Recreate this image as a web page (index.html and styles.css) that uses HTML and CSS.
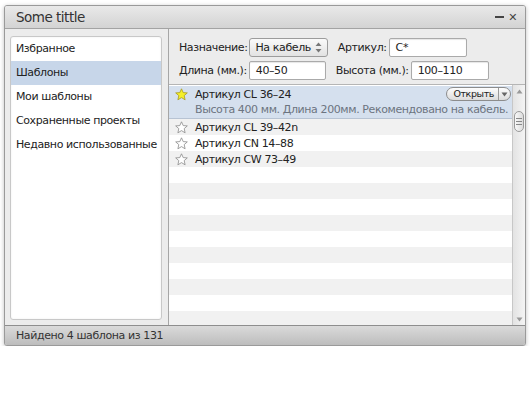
FILE: index.html
```html
<!DOCTYPE html>
<html lang="ru">
<head>
<meta charset="utf-8">
<title>Some tittle</title>
<link rel="stylesheet" href="styles.css">
</head>
<body>
<div class="window">
  <div class="titlebar">
    <span class="title">Some tittle</span>
    <span class="controls"><span class="min"></span><span class="close">✕</span></span>
  </div>
  <div class="main">
    <aside class="sidebar">
      <ul class="nav">
        <li>Избранное</li>
        <li class="active">Шаблоны</li>
        <li>Мои шаблоны</li>
        <li>Сохраненные проекты</li>
        <li>Недавно использованные</li>
      </ul>
    </aside>
    <section class="content">
      <div class="filters">
        <div class="frow">
          <label class="lbl">Назначение:</label>
          <span class="select">На кабель <span class="updown"><svg width="7" height="11" viewBox="0 0 7 11"><path d="M3.5 0.5 L6.5 4 L0.5 4 Z" fill="#777"/><path d="M3.5 10.5 L6.5 7 L0.5 7 Z" fill="#777"/></svg></span></span>
          <label class="lbl lbl2">Артикул:</label>
          <span class="input w78">C*</span>
        </div>
        <div class="frow">
          <label class="lbl">Длина (мм.):</label>
          <span class="input w77">40–50</span>
          <label class="lbl lbl2">Высота (мм.):</label>
          <span class="input w78">100–110</span>
        </div>
      </div>
      <div class="listwrap">
        <div class="list">
          <div class="row sel">
            <div class="line">
              <svg class="star" width="13" height="13" viewBox="0 0 13 13"><path d="M6.5 0.8 L8.2 4.6 L12.3 4.9 L9.2 7.6 L10.1 11.8 L6.5 9.6 L2.9 11.8 L3.8 7.6 L0.7 4.9 L4.8 4.6 Z" fill="#f4ef2a" stroke="#a89a20" stroke-width="0.8" stroke-linejoin="round"/></svg>
              <span class="name">Артикул CL 36–24</span>
              <span class="open"><span class="olbl">Открыть</span><span class="odrop"><svg width="7" height="5" viewBox="0 0 7 5"><path d="M0.5 0.5 L6.5 0.5 L3.5 4.5 Z" fill="#666"/></svg></span></span>
            </div>
            <div class="desc">Высота 400 мм. Длина 200мм. Рекомендовано на кабель.</div>
          </div>
          <div class="row alt"><svg class="star" width="13" height="13" viewBox="0 0 13 13"><path d="M6.5 0.8 L8.2 4.6 L12.3 4.9 L9.2 7.6 L10.1 11.8 L6.5 9.6 L2.9 11.8 L3.8 7.6 L0.7 4.9 L4.8 4.6 Z" fill="#fff" stroke="#8a8a8a" stroke-width="0.8" stroke-linejoin="round"/></svg><span class="name">Артикул CL 39–42n</span></div>
          <div class="row"><svg class="star" width="13" height="13" viewBox="0 0 13 13"><path d="M6.5 0.8 L8.2 4.6 L12.3 4.9 L9.2 7.6 L10.1 11.8 L6.5 9.6 L2.9 11.8 L3.8 7.6 L0.7 4.9 L4.8 4.6 Z" fill="#fff" stroke="#8a8a8a" stroke-width="0.8" stroke-linejoin="round"/></svg><span class="name">Артикул CN 14–88</span></div>
          <div class="row alt"><svg class="star" width="13" height="13" viewBox="0 0 13 13"><path d="M6.5 0.8 L8.2 4.6 L12.3 4.9 L9.2 7.6 L10.1 11.8 L6.5 9.6 L2.9 11.8 L3.8 7.6 L0.7 4.9 L4.8 4.6 Z" fill="#fff" stroke="#8a8a8a" stroke-width="0.8" stroke-linejoin="round"/></svg><span class="name">Артикул CW 73–49</span></div>
          <div class="row"></div>
          <div class="row alt"></div>
          <div class="row"></div>
          <div class="row alt"></div>
          <div class="row"></div>
          <div class="row alt"></div>
          <div class="row"></div>
          <div class="row alt"></div>
          <div class="row"></div>
          <div class="row alt"></div>
          <div class="row"></div>
        </div>
        <div class="scrollbar">
          <span class="arrow"><svg width="7" height="5" viewBox="0 0 7 5"><path d="M3.5 0.5 L6.5 4.5 L0.5 4.5 Z" fill="#999"/></svg></span>
          <div class="track"><span class="thumb"><span class="grip"></span><span class="grip"></span><span class="grip"></span></span></div>
          <span class="arrow"><svg width="7" height="5" viewBox="0 0 7 5"><path d="M0.5 0.5 L6.5 0.5 L3.5 4.5 Z" fill="#999"/></svg></span>
        </div>
      </div>
    </section>
  </div>
  <div class="statusbar">Найдено 4 шаблона из 131</div>
</div>
</body>
</html>
```

FILE: styles.css
```css
* { box-sizing: border-box; }
html, body { margin: 0; padding: 0; background: #fff; }
body {
  font-family: "DejaVu Sans", "Liberation Sans", sans-serif;
  font-size: 11px;
  letter-spacing: -0.4px;
  color: #222;
}
.window {
  margin: 5px 0 0 4px;
  width: 522px;
  height: 341px;
  border: 1px solid #9a9a9a;
  border-radius: 3px;
  box-shadow: 0 1px 4px rgba(0,0,0,0.25);
  display: flex;
  flex-direction: column;
  overflow: hidden;
  background: #ececec;
}
.titlebar {
  height: 23px;
  flex: none;
  display: flex;
  align-items: center;
  justify-content: space-between;
  padding: 0 8px 0 11px;
  background: linear-gradient(#e9e9e9, #d3d3d3);
  border-bottom: 1px solid #a3a3a3;
}
.title {
  font-size: 13.5px;
  letter-spacing: -0.5px;
  color: #333;
}
.controls {
  display: flex;
  align-items: center;
  gap: 4px;
  color: #444;
}
.min {
  width: 9px;
  height: 2px;
  background: #444;
}
.close {
  font-size: 11px;
  font-weight: bold;
  line-height: 1;
}
.main {
  flex: 1;
  display: flex;
  min-height: 0;
}
.sidebar {
  width: 164px;
  flex: none;
  border-right: 1px solid #a6a6a6;
  padding: 7px 6px 5px 5px;
  background: #ececec;
  display: flex;
}
.nav {
  list-style: none;
  margin: 0;
  padding: 0;
  flex: 1;
  background: #fff;
  border: 1px solid #c8c8c8;
  border-radius: 3px;
  box-shadow: inset 0 0 2px rgba(0,0,0,0.08);
}
.nav li {
  height: 24px;
  line-height: 24px;
  padding-left: 5px;
  white-space: nowrap;
}
.nav li.active {
  background: #c7d6e9;
}
.content {
  flex: 1;
  display: flex;
  flex-direction: column;
  min-width: 0;
}
.filters {
  height: 55px;
  flex: none;
  padding: 9px 0 0 10px;
  display: flex;
  flex-direction: column;
  gap: 4px;
  background: #ececec;
}
.frow {
  display: flex;
  align-items: center;
  height: 19px;
}
.lbl {
  margin-right: 2px;
}
.lbl2 {
  margin-left: 10px;
}
.select {
  height: 19px;
  padding: 0 5px 0 5px;
  display: flex;
  align-items: center;
  gap: 4px;
  border: 1px solid #9c9c9c;
  border-radius: 3px;
  background: linear-gradient(#fafafa, #e2e2e2);
}
.updown { display: flex; }
.input {
  height: 19px;
  padding: 0 6px;
  display: flex;
  align-items: center;
  background: #fff;
  border: 1px solid #aaa;
  border-radius: 2px;
  box-shadow: inset 0 1px 1px rgba(0,0,0,0.1);
}
.w77 { width: 77px; }
.w78 { width: 78px; }
.listwrap {
  flex: 1;
  display: flex;
  min-height: 0;
  border-top: 1px solid #b5b5b5;
}
.list {
  flex: 1;
  overflow: hidden;
  background: #fff;
}
.row {
  height: 16px;
  display: flex;
  align-items: center;
  padding-left: 6px;
  white-space: nowrap;
}
.row.alt { background: #f1f1f1; }
.row.sel {
  height: 33px;
  display: block;
  padding: 0 0 0 6px;
  background: #d5e0ee;
  border-bottom: 1px solid #b7c3d3;
}
.line {
  height: 16px;
  display: flex;
  align-items: center;
  margin-top: 1px;
}
.star { flex: none; margin-right: 7px; }
.name { flex: 1; }
.desc {
  padding-left: 20px;
  height: 15px;
  line-height: 15px;
  color: #6c7480;
}
.open {
  display: flex;
  align-items: stretch;
  height: 14px;
  margin-right: 1px;
  border: 1px solid #8c8c8c;
  border-radius: 7px;
  background: linear-gradient(#fdfdfd, #dcdcdc);
  font-size: 9.5px;
  line-height: 12px;
}
.olbl { padding: 0 4px 0 6px; }
.odrop {
  width: 12px;
  display: flex;
  align-items: center;
  justify-content: center;
  border-left: 1px solid #999;
}
.scrollbar {
  width: 13px;
  flex: none;
  display: flex;
  flex-direction: column;
  background: linear-gradient(to right, #e3e3e3, #f4f4f4);
  border-left: 1px solid #c7c7c7;
}
.arrow {
  height: 12px;
  display: flex;
  align-items: center;
  justify-content: center;
}
.track {
  flex: 1;
  padding-top: 14px;
}
.thumb {
  margin: 0 1px;
  height: 21px;
  border: 1px solid #9a9a9a;
  border-radius: 5px;
  background: linear-gradient(to right, #f8f8f8, #dcdcdc);
  display: flex;
  flex-direction: column;
  align-items: center;
  justify-content: center;
  gap: 2px;
}
.grip {
  width: 6px;
  height: 1px;
  background: #888;
}
.statusbar {
  height: 20px;
  flex: none;
  padding-left: 11px;
  line-height: 19px;
  background: linear-gradient(#dadada, #bdbdbd);
  border-top: 1px solid #8e8e8e;
  color: #333;
}
```
